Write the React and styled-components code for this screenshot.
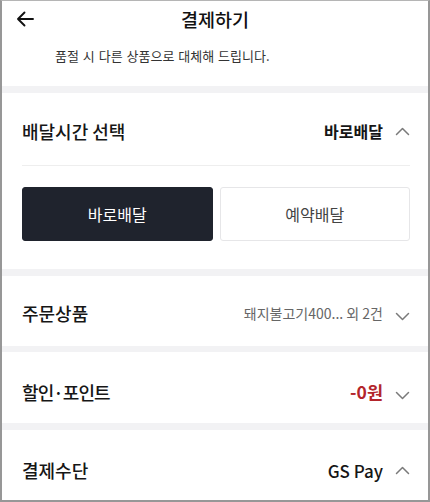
import React from "react";
import styled, { createGlobalStyle } from "styled-components";

const Global = createGlobalStyle`
  * { box-sizing: border-box; }
  html, body { margin: 0; padding: 0; background: #fff; }
  body { font-family: "Noto Sans CJK KR", "Noto Sans", sans-serif; color: #111; }
`;

const Frame = styled.div`
  width: 430px;
  height: 502px;
  border: 2px solid #979797;
  border-top: 1px solid #b5b5b5;
  overflow: hidden;
  display: flex;
  flex-direction: column;
  background: #fff;
`;

const Header = styled.header`
  height: 36px;
  flex: none;
  display: grid;
  grid-template-columns: 40px 1fr 40px;
  align-items: center;
`;

const BackBtn = styled.button`
  border: 0;
  background: none;
  padding: 0 0 0 14px;
  display: flex;
  align-items: center;
  height: 100%;
  margin-top: -1px;
`;

const Title = styled.h1`
  margin: 0;
  text-align: center;
  font-size: 18.5px;
  font-weight: 500;
  color: #111;
`;

const Notice = styled.p`
  margin: 0;
  height: 49px;
  flex: none;
  padding: 9px 0 0 53px;
  font-size: 13px;
  word-spacing: 1px;
  color: #333;
`;

const Band = styled.div`
  height: ${(p) => p.$h || 7}px;
  flex: none;
  background: #f2f2f4;
`;

const Section = styled.section`
  flex: none;
  padding: 0 18px 0 20px;
`;

const Row = styled.div`
  height: ${(p) => p.$h}px;
  padding-top: ${(p) => p.$pt || 0}px;
  display: flex;
  align-items: center;
  border-bottom: ${(p) => (p.$line ? "1px solid #eeeeee" : "none")};
`;

const RowTitle = styled.span`
  flex: 1;
  font-size: 18px;
  font-weight: 500;
  letter-spacing: ${(p) => p.$ls || 0}px;
  color: #161616;
`;

const Value = styled.span`
  font-size: ${(p) => p.$size || 16}px;
  font-weight: ${(p) => p.$weight || 500};
  color: ${(p) => p.$color || "#161616"};
  margin-right: 12px;
`;

const Chevron = styled.svg`
  width: 15px;
  height: 10px;
  flex: none;
  margin-top: ${(p) => (p.$down ? 6 : 0)}px;
`;

const Buttons = styled.div`
  display: grid;
  grid-template-columns: 1fr 1fr;
  gap: 7px;
  padding: 21px 0 28px;
`;

const Choice = styled.button`
  height: 54px;
  border-radius: 3px;
  font-family: inherit;
  font-size: 16px;
  border: 1px solid ${(p) => (p.$active ? "#1f232d" : "#e6e6e8")};
  background: ${(p) => (p.$active ? "#1f232d" : "#fff")};
  color: ${(p) => (p.$active ? "#fff" : "#444")};
`;

const Arrow = () => (
  <svg width="18" height="16" viewBox="0 0 18 16" fill="none">
    <path d="M17 8H2M8.5 1.5L2 8l6.5 6.5" stroke="#111" strokeWidth="1.9" strokeLinecap="round" strokeLinejoin="round" />
  </svg>
);

const Chev = ({ down }) => (
  <Chevron $down={down} viewBox="0 0 15 10" fill="none">
    <path
      d={down ? "M1.5 2.5L7.5 8.5L13.5 2.5" : "M1.5 8.5L7.5 2.5L13.5 8.5"}
      stroke="#7a7a7a"
      strokeWidth="1.5"
      strokeLinecap="round"
      strokeLinejoin="round"
    />
  </Chevron>
);

export default function App() {
  return (
    <>
      <Global />
      <Frame>
        <Header>
          <BackBtn aria-label="뒤로">
            <Arrow />
          </BackBtn>
          <Title>결제하기</Title>
          <span />
        </Header>
        <Notice>품절 시 다른 상품으로 대체해 드립니다.</Notice>
        <Band />
        <Section>
          <Row $h={73} $pt={4} $line>
            <RowTitle>배달시간 선택</RowTitle>
            <Value $weight={600}>바로배달</Value>
            <Chev />
          </Row>
          <Buttons>
            <Choice $active>바로배달</Choice>
            <Choice>예약배달</Choice>
          </Buttons>
        </Section>
        <Band />
        <Section>
          <Row $h={70} $pt={4}>
            <RowTitle>주문상품</RowTitle>
            <Value $size={14} $weight={400} $color="#666">돼지불고기400... 외 2건</Value>
            <Chev down />
          </Row>
        </Section>
        <Band $h={6} />
        <Section>
          <Row $h={71} $pt={8}>
            <RowTitle $ls={-0.9}>할인·포인트</RowTitle>
            <Value $size={17.5} $weight={700} $color="#b3252b">-0원</Value>
            <Chev down />
          </Row>
        </Section>
        <Band />
        <Section>
          <Row $h={80}>
            <RowTitle>결제수단</RowTitle>
            <Value $size={17}>GS Pay</Value>
            <Chev />
          </Row>
        </Section>
      </Frame>
    </>
  );
}
